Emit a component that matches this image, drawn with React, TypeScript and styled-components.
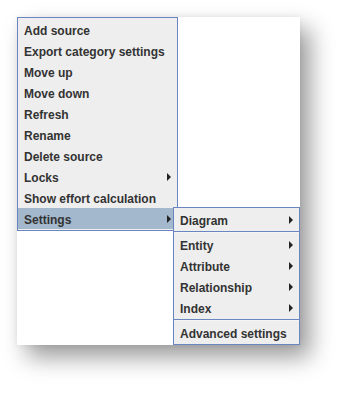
import styled, { createGlobalStyle } from 'styled-components';

const GlobalStyle = createGlobalStyle`
  html, body {
    margin: 0;
    padding: 0;
    background: #ffffff;
  }
  body {
    font-family: "Liberation Sans", Arial, sans-serif;
  }
`;

const Page = styled.div`
  width: 348px;
  height: 393px;
  padding: 17px 0 0 17px;
  box-sizing: border-box;
`;

const Shot = styled.div`
  position: relative;
  width: 283px;
  height: 328px;
  background: #ffffff;
  box-shadow:
    0 0 6px rgba(0, 0, 0, 0.06),
    10px 12px 22px rgba(0, 0, 0, 0.4);
`;

const Menu = styled.div<{ $width: number }>`
  width: ${p => p.$width}px;
  box-sizing: border-box;
  background: #eeeeee;
  border: 1px solid #6a86c1;
  padding: 1px 0;
  display: flex;
  flex-direction: column;
`;

const SubMenu = styled(Menu)`
  position: absolute;
  left: 156px;
  top: 190px;
`;

const Item = styled.div<{ $active?: boolean }>`
  height: 21px;
  box-sizing: border-box;
  display: flex;
  align-items: center;
  justify-content: space-between;
  padding: 2px 5px 0 6px;
  background: ${p => (p.$active ? '#a3b8cc' : 'transparent')};
  color: #333333;
  font-size: 12px;
  font-weight: bold;
  white-space: nowrap;
`;

const Arrow = styled.span`
  width: 0;
  height: 0;
  border-top: 4px solid transparent;
  border-bottom: 4px solid transparent;
  border-left: 4px solid #222222;
  margin: 0 1px 2px 0;
`;

const Separator = styled.div`
  height: 1px;
  background: #6a86c1;
  margin: 1px 0 1px;
  border-bottom: 1px solid #f4f4f4;
`;

const mainItems: { label: string; sub?: boolean }[] = [
  { label: 'Add source' },
  { label: 'Export category settings' },
  { label: 'Move up' },
  { label: 'Move down' },
  { label: 'Refresh' },
  { label: 'Rename' },
  { label: 'Delete source' },
  { label: 'Locks', sub: true },
  { label: 'Show effort calculation' },
];

export default function App() {
  return (
    <Page>
      <GlobalStyle />
      <Shot>
        <Menu $width={161}>
          {mainItems.map(it => (
            <Item key={it.label}>
              {it.label}
              {it.sub && <Arrow />}
            </Item>
          ))}
          <Item $active>
            Settings
            <Arrow />
          </Item>
        </Menu>
        <SubMenu $width={127}>
          <Item>
            Diagram
            <Arrow />
          </Item>
          <Separator />
          <Item>
            Entity
            <Arrow />
          </Item>
          <Item>
            Attribute
            <Arrow />
          </Item>
          <Item>
            Relationship
            <Arrow />
          </Item>
          <Item>
            Index
            <Arrow />
          </Item>
          <Separator />
          <Item>Advanced settings</Item>
        </SubMenu>
      </Shot>
    </Page>
  );
}
